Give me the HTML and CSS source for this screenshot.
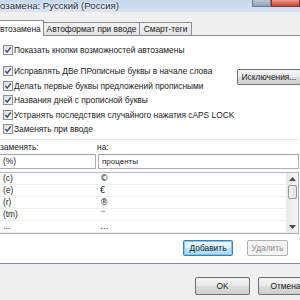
FILE: index.html
```html
<!DOCTYPE html>
<html>
<head>
<meta charset="utf-8">
<link rel="stylesheet" href="styles.css">
</head>
<body>
<div class="win">
  <div class="titlebar">
    <span class="title">озамена: Русский (Россия)</span>
    <div class="caption">
      <span class="cap-help"></span>
      <span class="cap-close"></span>
    </div>
  </div>
  <div class="client">
    <div class="tabs">
      <div class="tab active">втозамена</div>
      <div class="tab">Автоформат при вводе</div>
      <div class="tab">Смарт-теги</div>
    </div>
    <div class="panel">
      <div class="chk first"><span class="box"><svg viewBox="0 0 9 9" width="9" height="9"><path d="M1.5 4.6 L3.6 7 L7.6 1.6" fill="none" stroke="#3c4a6b" stroke-width="1.6"/></svg></span>Показать кнопки возможностей автозамены</div>
      <div class="group">
        <div class="checks">
          <div class="chk"><span class="box"><svg viewBox="0 0 9 9" width="9" height="9"><path d="M1.5 4.6 L3.6 7 L7.6 1.6" fill="none" stroke="#3c4a6b" stroke-width="1.6"/></svg></span>Исправлять ДВе ПРописные буквы в начале слова</div>
          <div class="chk"><span class="box"><svg viewBox="0 0 9 9" width="9" height="9"><path d="M1.5 4.6 L3.6 7 L7.6 1.6" fill="none" stroke="#3c4a6b" stroke-width="1.6"/></svg></span>Делать первые буквы предложений прописными</div>
          <div class="chk"><span class="box"><svg viewBox="0 0 9 9" width="9" height="9"><path d="M1.5 4.6 L3.6 7 L7.6 1.6" fill="none" stroke="#3c4a6b" stroke-width="1.6"/></svg></span>Названия дней с прописной буквы</div>
          <div class="chk"><span class="box"><svg viewBox="0 0 9 9" width="9" height="9"><path d="M1.5 4.6 L3.6 7 L7.6 1.6" fill="none" stroke="#3c4a6b" stroke-width="1.6"/></svg></span>Устранять последствия случайного нажатия cAPS LOCK</div>
          <div class="chk"><span class="box"><svg viewBox="0 0 9 9" width="9" height="9"><path d="M1.5 4.6 L3.6 7 L7.6 1.6" fill="none" stroke="#3c4a6b" stroke-width="1.6"/></svg></span>Заменять при вводе</div>
        </div>
        <div class="btn exc">Исключения...</div>
      </div>
      <div class="sep"></div>
      <div class="labels"><span class="lab-l">заменять:</span><span class="lab-r">на:</span></div>
      <div class="inputs">
        <div class="inp inp-l">(%)</div>
        <div class="inp inp-r">проценты</div>
      </div>
      <div class="list">
        <div class="rows">
          <div class="row"><span class="c1">(c)</span><span class="c2">©</span></div>
          <div class="row"><span class="c1">(e)</span><span class="c2">€</span></div>
          <div class="row"><span class="c1">(r)</span><span class="c2">®</span></div>
          <div class="row"><span class="c1">(tm)</span><span class="c2 tm">™</span></div>
          <div class="row"><span class="c1">...</span><span class="c2">…</span></div>
        </div>
        <div class="sbar">
          <div class="arrow up"><svg viewBox="0 0 7 4" width="7" height="4"><path d="M0 4 L3.5 0 L7 4 Z" fill="#4d4d4d"/></svg></div>
          <div class="thumb"></div>
          <div class="track"></div>
          <div class="arrow down"><svg viewBox="0 0 7 4" width="7" height="4"><path d="M0 0 L3.5 4 L7 0 Z" fill="#4d4d4d"/></svg></div>
        </div>
      </div>
      <div class="actions">
        <div class="btn def">Добавить</div>
        <div class="btn dis">Удалить</div>
      </div>
    </div>
    <div class="footer">
      <div class="btn ok">OK</div>
      <div class="btn cancel">Отмена</div>
    </div>
  </div>
</div>
</body>
</html>
```
FILE: styles.css
```css
html, body {
  margin: 0;
  padding: 0;
  width: 300px;
  height: 300px;
  overflow: hidden;
  background: #f0f0f0;
}
.win {
  width: 316px;
  font-family: "Liberation Sans", Arial, sans-serif;
  font-size: 8.4px;
  color: #1b1b1b;
}
.titlebar {
  height: 12px;
  display: flex;
  align-items: flex-start;
  background: linear-gradient(#c6d8ec, #d4e2f2);
}
.title {
  line-height: 11px;
  font-size: 9.6px;
  color: #1e2a3a;
  text-shadow: 0 0 4px #fff, 0 0 2px #fff;
  white-space: nowrap;
}
.caption {
  margin-left: auto;
  margin-right: 16px;
  display: flex;
}
.cap-help {
  width: 19px;
  height: 7px;
  background: linear-gradient(#b9c6d4, #8fa3b8);
  border: 1px solid #6b7d92;
  border-top: none;
  box-sizing: border-box;
}
.cap-close {
  width: 29px;
  height: 7px;
  background: linear-gradient(#e89a8c, #c8432f);
  border: 1px solid #8a2f22;
  border-top: none;
  box-sizing: border-box;
}
.client {
  background: #f0f0f0;
  padding-top: 8px;
}
.tabs {
  display: flex;
  align-items: flex-end;
  height: 15px;
  position: relative;
  z-index: 1;
}
.tab {
  height: 12px;
  line-height: 12px;
  padding: 0;
  border: 1px solid #898c95;
  border-bottom: none;
  background: linear-gradient(#f2f2f2, #e4e4e4);
  margin-left: -1px;
  white-space: nowrap;
  flex: none;
  text-align: center;
}
.tab.active {
  height: 15px;
  line-height: 16px;
  background: #fff;
  margin-left: 0;
  padding: 0;
  border-left: none;
  width: 43px;
  text-align: left;
  margin-bottom: -1px;
  position: relative;
  z-index: 2;
}
.tab:nth-child(2) { width: 95px; }
.tab:nth-child(3) { width: 51px; }
.panel {
  background: #fff;
  border-top: 1px solid #898c95;
  border-bottom: 1px solid #898c95;
  border-right: 1px solid #898c95;
  width: 316px;
  box-sizing: border-box;
  padding: 7px 0 7px 0;
}
.chk {
  display: flex;
  align-items: center;
  height: 14.5px;
  padding-left: 3px;
  white-space: nowrap;
}
.chk.first { margin-bottom: 6.5px; }
.box {
  width: 8px;
  height: 8px;
  border: 1px solid #8e8f8f;
  background: linear-gradient(135deg, #dcdcdc, #fbfbfb);
  margin-right: 1px;
  display: flex;
  flex: none;
}
.box svg { display: block; width: 8px; height: 8px; }
.group {
  display: flex;
  align-items: flex-start;
}
.checks { flex: 1; min-width: 0; }
.btn {
  box-sizing: border-box;
  border: 1px solid #707070;
  border-radius: 2px;
  background: linear-gradient(#f3f3f3 0%, #ebebeb 49%, #dddddd 50%, #cfcfcf 100%);
  text-align: center;
  white-space: nowrap;
  color: #1b1b1b;
  flex: none;
}
.exc {
  width: 64px;
  height: 16px;
  line-height: 14px;
  margin-top: 5px;
  margin-right: 14px;
}
.sep {
  height: 1px;
  background: #e3e8ee;
  margin: 2px 16px 1px 0;
}
.labels {
  display: flex;
  height: 12px;
  line-height: 12px;
}
.lab-l { width: 97px; }
.inputs {
  display: flex;
  gap: 2px;
  margin-top: 1px;
}
.inp {
  box-sizing: border-box;
  height: 15px;
  line-height: 13px;
  border: 1px solid #abadb3;
  border-top-color: #9da2a8;
  padding-left: 3px;
  background: #fff;
}
.inp-l { width: 97px; margin-left: -1px; }
.inp-r { width: 201px; font-size: 8px; }
.list {
  margin-top: 3px;
  margin-left: -1px;
  width: 300px;
  height: 62px;
  box-sizing: border-box;
  border: 1px solid #abadb3;
  border-top-color: #b5b8bd;
  display: flex;
}
.rows { flex: 1; }
.row {
  display: flex;
  height: 12px;
  line-height: 11px;
  border-bottom: 1px solid #eceef0;
  box-sizing: border-box;
}
.c1 { width: 98px; padding-left: 3px; box-sizing: border-box; }
.c2 {
  padding-left: 2px;
  font-family: "DejaVu Sans", sans-serif;
  font-variant-emoji: text;
  color: #1b1b1b;
}
.c2.tm { font-size: 6px; line-height: 7px; }
.sbar {
  width: 11px;
  display: flex;
  flex-direction: column;
  background: linear-gradient(90deg, #e8e8e8, #f5f5f5);
  border-left: 1px solid #ececec;
}
.arrow {
  height: 12px;
  display: flex;
  align-items: center;
  justify-content: center;
}
.thumb {
  height: 12px;
  margin: 0 1px;
  border: 1px solid #979797;
  border-radius: 2px;
  background: linear-gradient(90deg, #f3f3f3, #e2e2e2);
}
.track { flex: 1; }
.actions {
  display: flex;
  justify-content: flex-end;
  gap: 14px;
  margin-top: 6px;
  padding-right: 27px;
}
.actions .btn { height: 16px; line-height: 14px; }
.def {
  width: 50px;
  border-color: #3c7fb1;
  background: linear-gradient(#eaf6fd 0%, #d9f0fc 49%, #bee6fd 50%, #a7d9f5 100%);
  box-shadow: inset 0 0 0 1px #7cc7f4;
}
.dis {
  width: 41px;
  border-color: #adb2b5;
  background: #f4f4f4;
  color: #8b8b8b;
}
.footer {
  display: flex;
  gap: 8px;
  padding: 13px 0 0 195px;
  height: 40px;
  box-sizing: border-box;
}
.footer .btn {
  width: 55px;
  height: 18px;
  line-height: 16px;
}
```
